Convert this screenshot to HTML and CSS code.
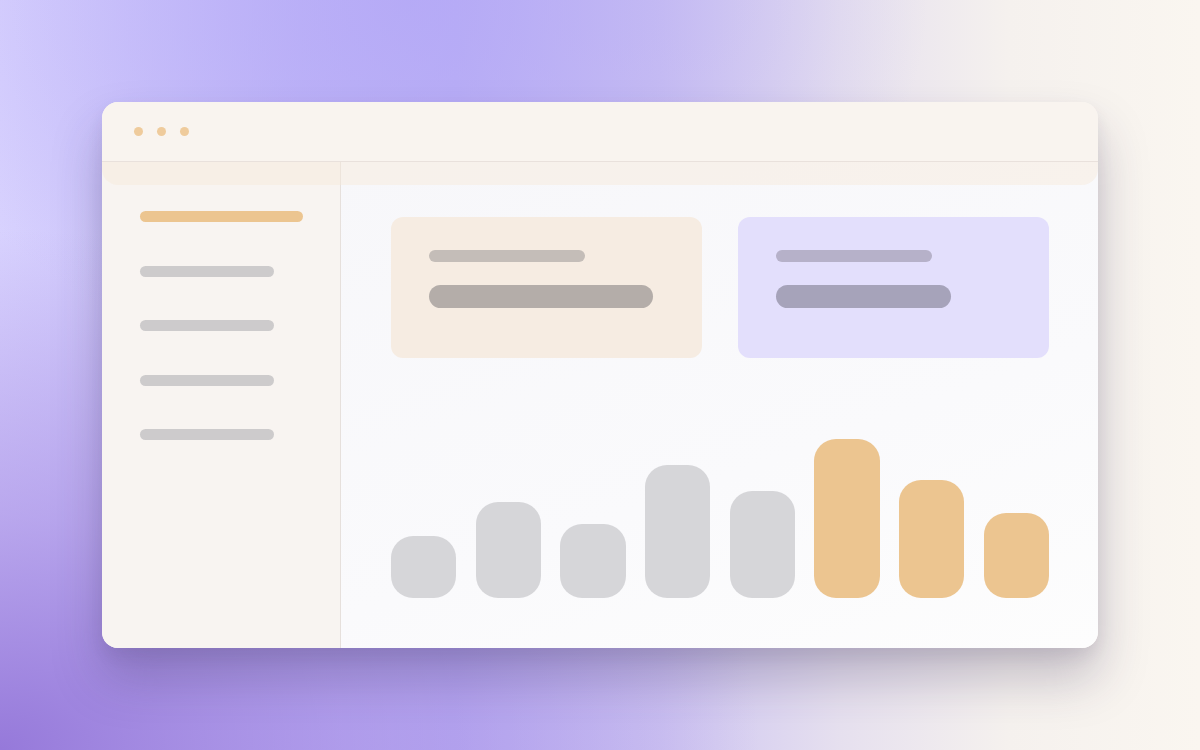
FILE: index.html
```html
<!DOCTYPE html>
<html lang="en">
<head>
<meta charset="utf-8">
<title>Dashboard</title>
<link rel="stylesheet" href="styles.css">
</head>
<body>
<div class="window">
  <div class="titlebar">
    <span class="dot"></span><span class="dot"></span><span class="dot"></span>
  </div>
  <div class="body">
    <div class="band"></div>
    <aside class="sidebar">
      <div class="nav nav-active"></div>
      <div class="nav"></div>
      <div class="nav"></div>
      <div class="nav"></div>
      <div class="nav"></div>
    </aside>
    <main class="main">
      <div class="cards">
        <div class="card card-peach">
          <div class="line-thin"></div>
          <div class="line-thick"></div>
        </div>
        <div class="card card-lilac">
          <div class="line-thin"></div>
          <div class="line-thick short"></div>
        </div>
      </div>
      <div class="chart">
        <div class="bar" style="height:62px"></div>
        <div class="bar" style="height:96px"></div>
        <div class="bar" style="height:74px"></div>
        <div class="bar" style="height:133px"></div>
        <div class="bar" style="height:107px"></div>
        <div class="bar bar-hi" style="height:159px"></div>
        <div class="bar bar-hi" style="height:118px"></div>
        <div class="bar bar-hi" style="height:85px"></div>
      </div>
    </main>
  </div>
</div>
</body>
</html>
```
FILE: styles.css
```css
html, body {
  margin: 0;
  padding: 0;
  width: 1200px;
  height: 750px;
  overflow: hidden;
}
body {
  font-family: "Inter", "Liberation Sans", sans-serif;
  display: flex;
  align-items: center;
  justify-content: center;
  background:
    radial-gradient(ellipse 760px 520px at 0% 100%, rgba(146,116,216,0.95), rgba(160,132,224,0.55) 45%, rgba(170,150,230,0) 100%),
    radial-gradient(ellipse 520px 380px at 34% 0%, rgba(178,166,246,0.7), rgba(178,166,246,0) 100%),
    linear-gradient(90deg, #d8d2fe 0%, #c3baf9 25%, #bdb3f6 38%, #cdc4f2 55%, #e6e0ef 70%, #f5f1ee 84%, #faf6f0 100%);
}
.window {
  width: 996px;
  height: 546px;
  border-radius: 16px;
  overflow: hidden;
  display: flex;
  flex-direction: column;
  background: #f8f4f1;
  box-shadow: 0 30px 50px rgba(50, 40, 80, 0.26), 0 8px 16px rgba(50, 40, 80, 0.08);
}
.titlebar {
  height: 59px;
  flex: none;
  background: #f9f4ef;
  border-bottom: 1px solid #e9e1dc;
  display: flex;
  align-items: center;
  gap: 14px;
  padding-left: 32px;
  box-sizing: content-box;
}
.dot {
  width: 9px;
  height: 9px;
  border-radius: 50%;
  background: #efcb9c;
}
.body {
  flex: 1;
  display: flex;
  position: relative;
}
.band {
  position: absolute;
  top: 0;
  left: 0;
  right: 0;
  height: 23px;
  border-radius: 0 0 16px 16px;
  background: rgba(246, 232, 218, 0.45);
}
.sidebar {
  width: 239px;
  flex: none;
  border-right: 1px solid #e6e0dc;
  background: #f8f4f1;
  padding: 49px 0 0 38px;
  box-sizing: border-box;
  display: flex;
  flex-direction: column;
  gap: 43.5px;
}
.nav {
  width: 134px;
  height: 11px;
  border-radius: 6px;
  background: #cdcbcc;
}
.nav-active {
  width: 163px;
  background: #ecc590;
}
.main {
  flex: 1;
  background: linear-gradient(160deg, #f7f7fa 0%, #fafafc 60%, #fdfdfd 100%);
  padding: 55px 49px 50px 50px;
  display: flex;
  flex-direction: column;
  justify-content: space-between;
}
.cards {
  display: grid;
  grid-template-columns: 1fr 1fr;
  gap: 36px;
}
.card {
  height: 141px;
  border-radius: 12px;
  padding: 33px 38px 0;
  box-sizing: border-box;
  display: flex;
  flex-direction: column;
  gap: 23px;
}
.card-peach { background: #f6ece2; }
.card-lilac { background: #e3dffc; }
.line-thin {
  width: 156px;
  height: 12px;
  border-radius: 6px;
}
.line-thick {
  width: 224px;
  height: 23px;
  border-radius: 12px;
}
.line-thick.short { width: 175px; }
.card-peach .line-thin { background: #c4bdb8; }
.card-peach .line-thick { background: #b4ada9; }
.card-lilac .line-thin { background: #b6b1c9; }
.card-lilac .line-thick { background: #a6a3ba; }
.chart {
  display: grid;
  grid-template-columns: repeat(8, 1fr);
  column-gap: 19.5px;
  align-items: end;
}
.bar {
  border-radius: 22px;
  background: #d6d6d9;
}
.bar-hi { background: #ecc590; }
```
